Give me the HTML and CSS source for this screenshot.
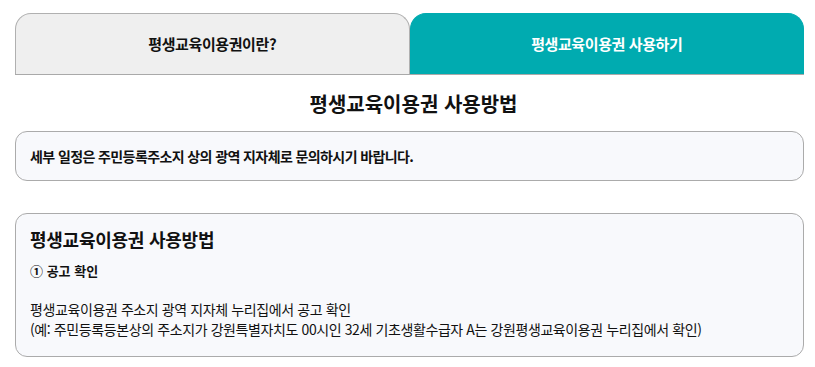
FILE: index.html
```html
<!DOCTYPE html>
<html lang="ko">
<head>
<meta charset="utf-8">
<link rel="stylesheet" href="styles.css">
</head>
<body>
<div class="page">
  <div class="tabs">
    <div class="tab">평생교육이용권이란?</div>
    <div class="tab active">평생교육이용권 사용하기</div>
  </div>
  <h2 class="title">평생교육이용권 사용방법</h2>
  <div class="notice">세부 일정은 주민등록주소지 상의 광역 지자체로 문의하시기 바랍니다.</div>
  <div class="card">
    <h3 class="card-title">평생교육이용권 사용방법</h3>
    <p class="step">① 공고 확인</p>
    <p class="desc">평생교육이용권 주소지 광역 지자체 누리집에서 공고 확인<br>(예: 주민등록등본상의 주소지가 강원특별자치도 00시인 32세 기초생활수급자 A는 강원평생교육이용권 누리집에서 확인)</p>
  </div>
</div>
</body>
</html>
```
FILE: styles.css
```css
* { box-sizing: border-box; }
body {
  margin: 0;
  background: #fff;
  color: #111;
  font-family: "Noto Sans CJK KR", "Noto Sans", sans-serif;
}
.page {
  margin: 13px 11px 0 15px;
}
.tabs {
  display: flex;
  height: 62px;
  border-bottom: 1px solid #a9a9a9;
}
.tab {
  flex: 1;
  display: flex;
  align-items: center;
  justify-content: center;
  background: #efefef;
  border: 1px solid #b0b0b0;
  border-bottom: none;
  border-radius: 16px 16px 0 0;
  font-size: 15px;
  font-weight: 700;
  letter-spacing: -0.4px;
  color: #111;
  padding-bottom: 1px;
}
.tab.active {
  background: #00abb0;
  border-color: #00abb0;
  color: #fff;
}
.title {
  margin: 16px 0 0;
  padding-left: 8px;
  font-size: 20px;
  line-height: 26px;
  text-align: center;
  font-weight: 700;
  letter-spacing: 0;
}
.notice {
  margin-top: 14px;
  height: 50px;
  display: flex;
  align-items: center;
  padding: 0 14px;
  background: #f8f9fc;
  border: 1px solid #ababab;
  border-radius: 12px;
  font-size: 14px;
  font-weight: 700;
  letter-spacing: -0.6px;
}
.card {
  margin-top: 32px;
  padding: 14px 14px 17px;
  background: #f8f9fc;
  border: 1px solid #ababab;
  border-radius: 12px;
}
.card-title {
  margin: 0;
  font-size: 18px;
  line-height: 22px;
  font-weight: 700;
  letter-spacing: -0.25px;
}
.step {
  margin: 12px 0 0;
  font-size: 13px;
  line-height: 18px;
  font-weight: 700;
  letter-spacing: 0;
}
.desc {
  margin: 19px 0 0;
  font-size: 14px;
  line-height: 20px;
  letter-spacing: -0.4px;
}
```
